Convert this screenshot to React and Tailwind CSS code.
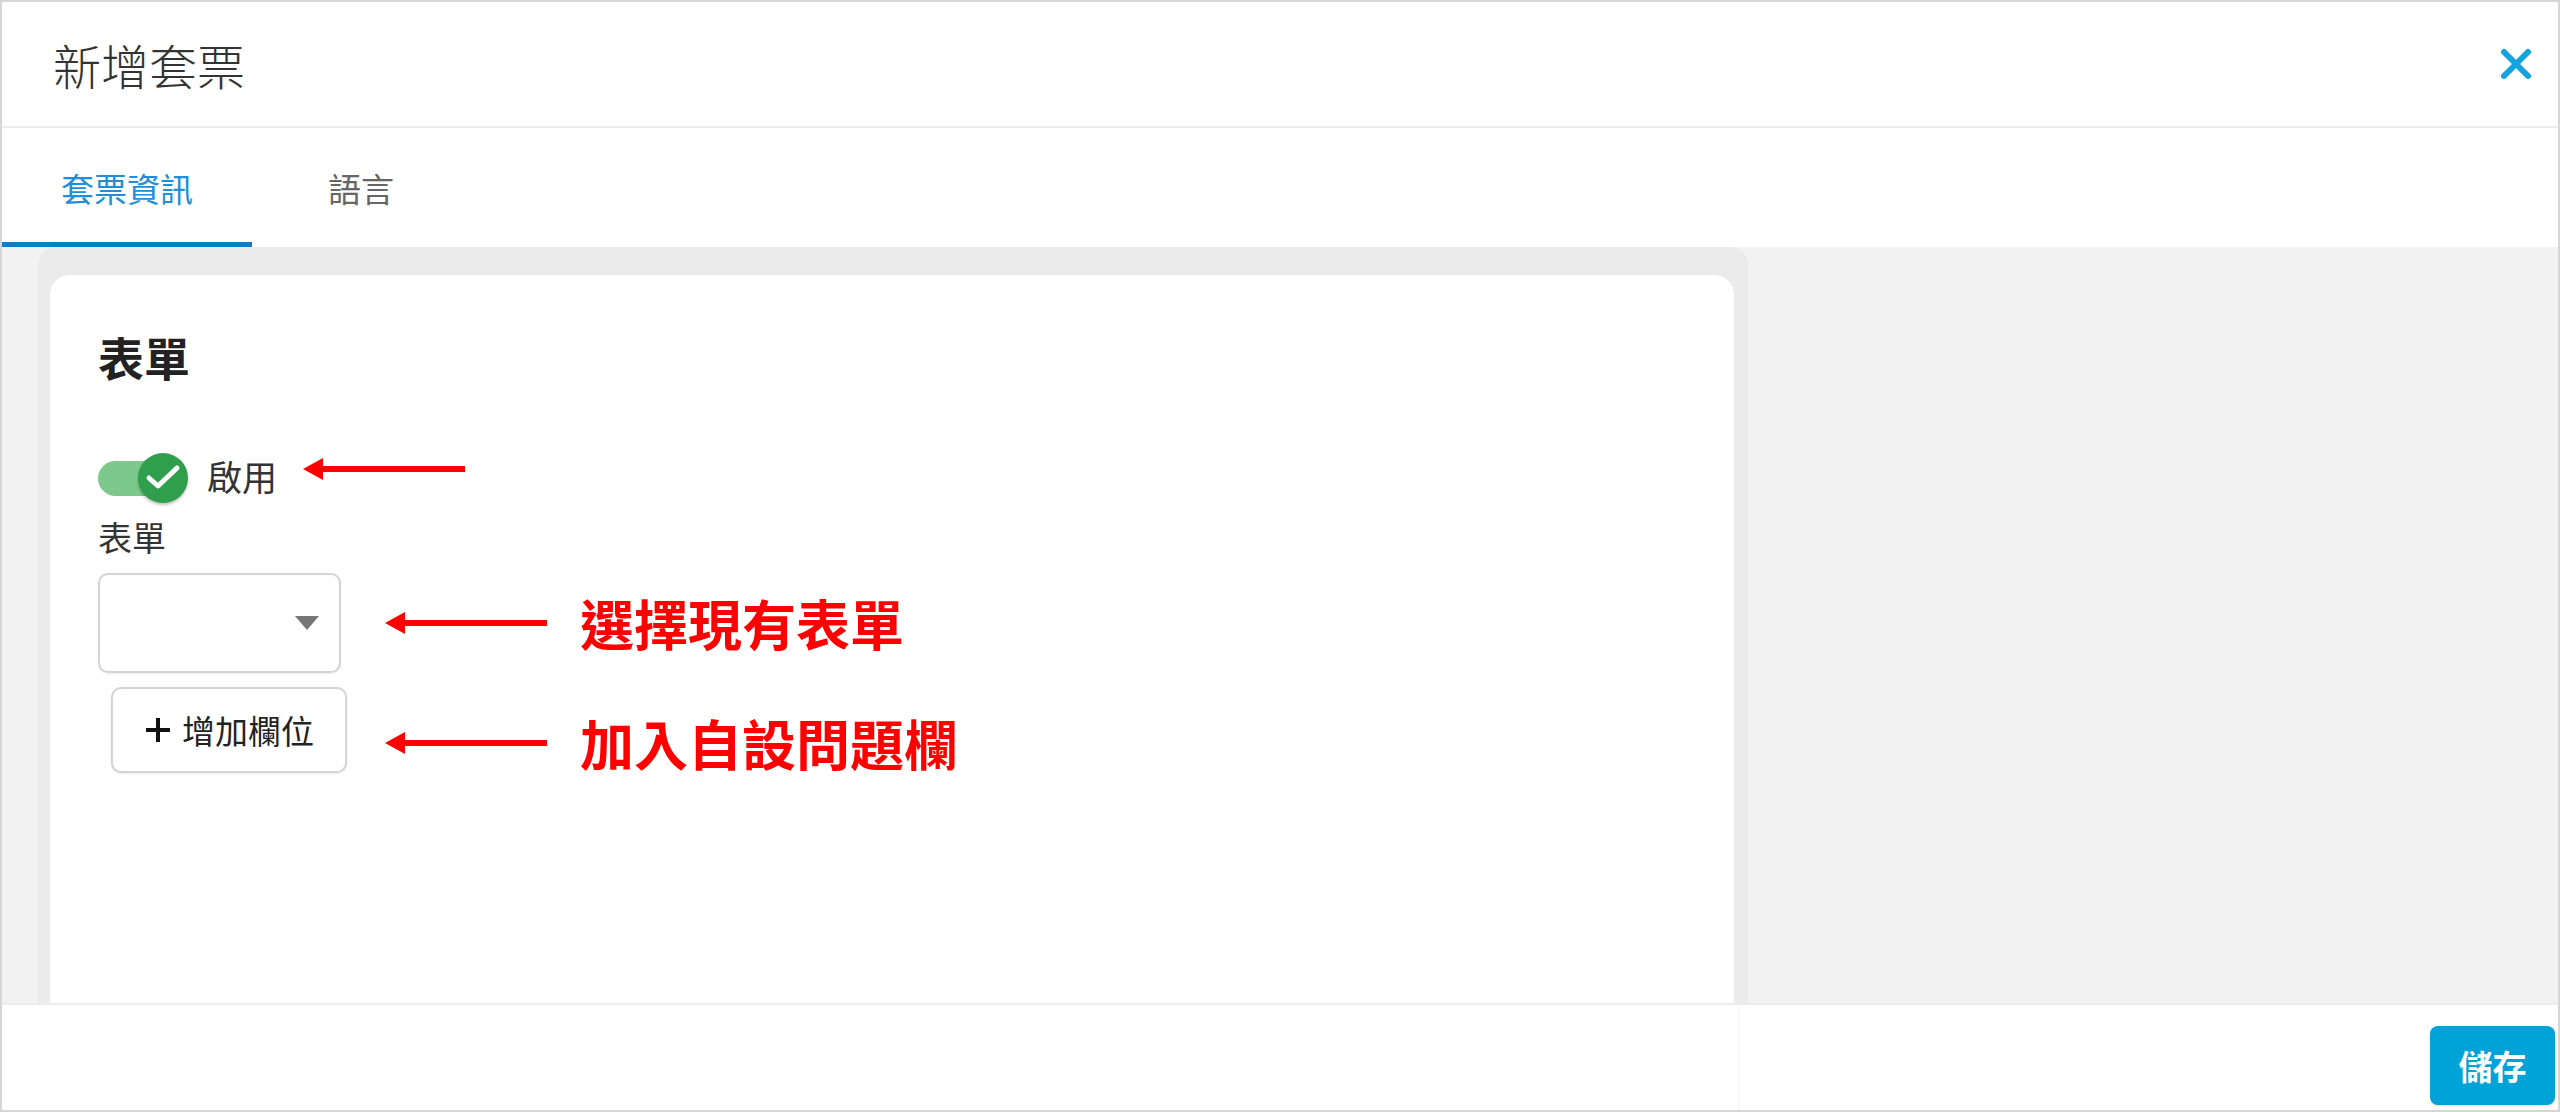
import React from "react";

const RedArrow = ({ className = "" }) => (
  <svg width="162" height="22" viewBox="0 0 162 22" className={className}>
    <rect x="16" y="8" width="146" height="6" fill="#ff0000" />
    <polygon points="0,11 20,0 20,22" fill="#ff0000" />
  </svg>
);

const Toggle = () => (
  <div className="relative w-[90px] h-[50px]">
    <div className="absolute left-0 top-[8px] w-[80px] h-[35px] rounded-full bg-[#7dc98b]" />
    <div className="absolute right-0 top-0 w-[50px] h-[50px] rounded-full bg-[#2f9e4d] shadow-[0_2px_3px_rgba(0,0,0,0.25)] flex items-center justify-center">
      <svg width="50" height="50" viewBox="0 0 50 50">
        <path
          d="M11 25 L20 33 L39 15"
          fill="none"
          stroke="#fff"
          strokeWidth="5"
          strokeLinecap="round"
          strokeLinejoin="round"
        />
      </svg>
    </div>
  </div>
);

export default function App() {
  return (
    <div className="w-[2560px] h-[1112px] border-2 border-[#d6d6d6] bg-white flex flex-col overflow-hidden font-['Noto_Sans_CJK_TC','Noto_Sans_CJK_SC',sans-serif]">
      {/* Header */}
      <header className="h-[126px] shrink-0 flex items-center justify-between pl-[51px] pr-[24px] border-b-2 border-[#ececec]">
        <h1 className="text-[48px] leading-none font-light text-[#333]">新增套票</h1>
        <button aria-label="close" className="w-[36px] h-[36px] flex items-center justify-center">
          <svg width="34" height="34" viewBox="0 0 34 34">
            <path
              d="M5 5 L29 29 M29 5 L5 29"
              stroke="#14a3dc"
              strokeWidth="6"
              strokeLinecap="round"
            />
          </svg>
        </button>
      </header>

      {/* Tabs */}
      <nav className="h-[119px] shrink-0 flex">
        <div className="w-[250px] flex flex-col">
          <div className="flex-1 flex items-center justify-center pt-[6px] text-[33px] leading-none text-[#1e8fd8]">
            套票資訊
          </div>
          <div className="h-[5px] bg-[#0a7fd0]" />
        </div>
        <div className="w-[218px] flex flex-col">
          <div className="flex-1 flex items-center justify-center pt-[6px] text-[33px] leading-none text-[#666]">
            語言
          </div>
          <div className="h-[5px]" />
        </div>
      </nav>

      {/* Body */}
      <main className="flex-1 min-h-0 flex bg-[#f2f2f2]">
        <div className="w-[36px] shrink-0" />
        <div className="w-[1710px] shrink-0 flex bg-[#ebebeb] rounded-t-[18px] pt-[28px] pl-[12px] pr-[14px]">
          <div className="flex-1 bg-white rounded-t-[20px] pl-[48px] pt-[58px] flex flex-col items-start">
            <h2 className="text-[46px] leading-none font-bold text-[#222]">表單</h2>

            <div className="mt-[74px] flex items-center">
              <Toggle />
              <span className="ml-[19px] mb-[6px] text-[35px] leading-none text-[#333]">啟用</span>
              <RedArrow className="ml-[26px] mb-[18px]" />
            </div>

            <div className="mt-[17px] text-[34px] leading-none text-[#333]">表單</div>

            <div className="mt-[19px] flex items-center">
              <div className="w-[243px] h-[100px] border-2 border-[#d4d4d4] rounded-[10px] shadow-[0_1px_2px_rgba(0,0,0,0.08)] flex items-center justify-end pr-[20px]">
                <svg width="24" height="14" viewBox="0 0 24 14">
                  <polygon points="0,0 24,0 12,14" fill="#777" />
                </svg>
              </div>
              <RedArrow className="ml-[44px]" />
              <span className="ml-[33px] text-[54px] leading-none font-bold text-[#ff0000]">選擇現有表單</span>
            </div>

            <div className="mt-[14px] flex items-center">
              <button className="ml-[13px] w-[236px] h-[86px] border-2 border-[#d4d4d4] rounded-[10px] bg-white shadow-[0_1px_2px_rgba(0,0,0,0.08)] flex items-center justify-center gap-[10px] text-[33px] leading-none text-[#222]">
                <svg width="28" height="28" viewBox="0 0 28 28">
                  <path d="M14 2 V26 M2 14 H26" stroke="#111" strokeWidth="4" />
                </svg>
                <span>增加欄位</span>
              </button>
              <div className="mt-[26px] flex items-center">
                <RedArrow className="ml-[38px]" />
                <span className="ml-[33px] text-[54px] leading-none font-bold text-[#ff0000]">加入自設問題欄</span>
              </div>
            </div>
          </div>
        </div>
        <div className="flex-1" />
      </main>

      {/* Footer */}
      <footer className="h-[107px] shrink-0 flex border-t-2 border-[#ececec] bg-white">
        <div className="w-[1737px] shrink-0 border-r border-[#f4f4f4]" />
        <div className="flex-1 flex items-end justify-end pb-[5px] pr-[3px]">
          <button className="w-[125px] h-[79px] rounded-[8px] bg-[#00a2d8] text-white text-[34px] leading-none font-bold shadow-[0_1px_2px_rgba(0,0,0,0.15)]">
            儲存
          </button>
        </div>
      </footer>
    </div>
  );
}
